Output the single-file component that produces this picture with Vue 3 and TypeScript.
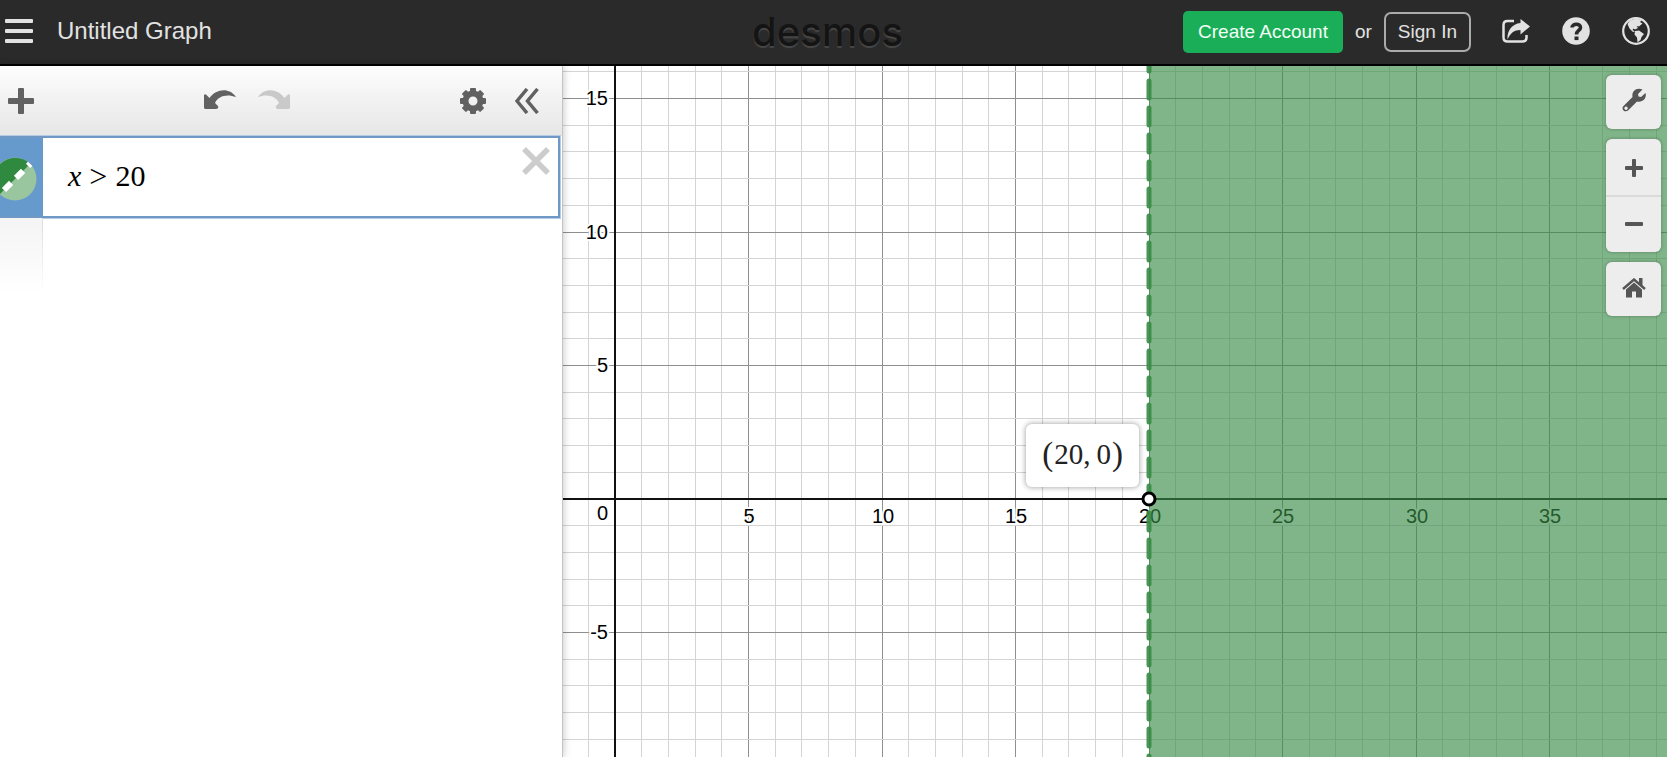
<script setup lang="ts">
import { computed, onBeforeUnmount, onMounted, ref } from 'vue'

interface Tick {
  value: number
  pos: number
  major: boolean
}

const UNIT = 26.7
const ORIGIN = { x: 53, y: 433 }
const BOUNDARY = 20
const LABEL_ROOM = 14

const title = ref('Untitled Graph')
const teeth = [0, 45, 90, 135, 180, 225, 270, 315]

const graph = ref<HTMLElement | null>(null)
const width = ref(0)
const height = ref(0)
let observer: ResizeObserver | undefined

function measure() {
  if (!graph.value) return
  width.value = graph.value.clientWidth
  height.value = graph.value.clientHeight
}

onMounted(() => {
  measure()
  observer = new ResizeObserver(measure)
  if (graph.value) observer.observe(graph.value)
})

onBeforeUnmount(() => observer?.disconnect())

function ticks(from: number, to: number, origin: number, direction: 1 | -1): Tick[] {
  const list: Tick[] = []
  for (let value = from; value <= to; value++) {
    if (value === 0) continue
    list.push({
      value,
      pos: Math.floor(origin + direction * value * UNIT),
      major: value % 5 === 0,
    })
  }
  return list
}

const columns = computed(() =>
  ticks(-1, Math.floor((width.value - ORIGIN.x) / UNIT), ORIGIN.x, 1),
)
const rows = computed(() =>
  ticks(-Math.floor((height.value - ORIGIN.y) / UNIT), 16, ORIGIN.y, -1),
)
const xLabels = computed(() =>
  columns.value.filter((t) => t.major && t.pos < width.value - LABEL_ROOM),
)
const yLabels = computed(() =>
  rows.value.filter((t) => t.major && t.pos < height.value - LABEL_ROOM),
)
const boundaryX = Math.round(ORIGIN.x + BOUNDARY * UNIT)
</script>

<template>
  <div class="app">
    <header class="header">
      <div class="side">
        <button class="icon-button" type="button" aria-label="Open menu">
          <svg width="28" height="24" viewBox="0 0 28 24" fill="currentColor">
            <rect width="28" height="4" rx="1" />
            <rect y="10" width="28" height="4" rx="1" />
            <rect y="20" width="28" height="4" rx="1" />
          </svg>
        </button>
        <button class="title" type="button">{{ title }}</button>
      </div>
      <a class="logo" href="#">desmos</a>
      <div class="side account">
        <button class="create" type="button">Create Account</button>
        <span class="or">or</span>
        <button class="sign-in" type="button">Sign In</button>
        <nav class="links">
          <button class="icon-button" type="button" aria-label="Share">
            <svg width="28" height="28" viewBox="0 0 28 28">
              <path d="M12 4H5.500Q1.500 4 1.500 8V20.500Q1.500 24.500 5.500 24.500H20.500Q24.500 24.500 24.500 20.500V18" fill="none" stroke="currentColor" stroke-width="2.500" />
              <path d="M18.500 2L28 9.500L18.500 17.500V13C12 13 8.500 16 5.500 22.500C5 14 9.500 7 18.500 6Z" fill="currentColor" />
            </svg>
          </button>
          <button class="icon-button" type="button" aria-label="Help">
            <svg width="28" height="28" viewBox="0 0 28 28">
              <circle cx="14" cy="14" r="13.800" fill="currentColor" />
              <path d="M10 10.500C10 6.500 18.500 6 18.500 10.500C18.500 13.500 14.500 13.500 14.500 17.500" fill="none" stroke="#2a2a2a" stroke-width="3.600" />
              <rect x="12.500" y="19.500" width="4" height="3.600" fill="#2a2a2a" />
            </svg>
          </button>
          <button class="icon-button" type="button" aria-label="Language">
            <svg width="28" height="28" viewBox="0 0 28 28">
              <circle cx="14" cy="14" r="12.800" fill="none" stroke="currentColor" stroke-width="2.200" />
              <path d="M8 3.500L14 1.500L20 3L18 5L20.500 6.500L17 9.500L14.500 9L16 11L13 12.500L11.500 11.500L10.500 13L13 14.500L11 15L7.500 11.500L5.500 7Z" fill="currentColor" />
              <path d="M13 14L17 13.500L22 17L19.500 20L18.500 23L15.500 25.500L15 20.500L12.500 17.500Z" fill="currentColor" />
            </svg>
          </button>
        </nav>
      </div>
    </header>

    <main class="workspace">
      <section class="panel" aria-label="Expression list">
        <div class="toolbar">
          <button class="tool" type="button" aria-label="Add item">
            <svg width="26" height="26" viewBox="0 0 26 26" fill="currentColor">
              <rect x="10" width="6" height="26" rx="1" />
              <rect y="10" width="26" height="6" rx="1" />
            </svg>
          </button>
          <div class="history">
            <button class="tool" type="button" aria-label="Undo">
              <svg width="32" height="22" viewBox="0 0 32 22">
                <path d="M0 5Q1 3.500 2.500 5L5.500 8C12-1 25-3 32 7C23 3.500 14 6 11 13L14 16Q15 19 12 19H1.500Q0 19 0 17.500Z" fill="currentColor" />
              </svg>
            </button>
            <button class="tool" type="button" aria-label="Redo" disabled>
              <svg width="32" height="22" viewBox="0 0 32 22">
                <path d="M32 5Q31 3.500 29.500 5L26.500 8C20-1 7-3 0 7C9 3.500 18 6 21 13L18 16Q17 19 20 19H30.500Q32 19 32 17.500Z" fill="currentColor" />
              </svg>
            </button>
          </div>
          <div class="settings">
            <button class="tool" type="button" aria-label="Edit list">
              <svg width="26" height="26" viewBox="-13 -13 26 26">
                <circle r="7.500" fill="none" stroke="currentColor" stroke-width="6" />
                <rect v-for="angle in teeth" :key="angle" x="-3" y="-13" width="6" height="5" rx="1" fill="currentColor" :transform="`rotate(${angle})`" />
              </svg>
            </button>
            <button class="tool" type="button" aria-label="Hide list">
              <svg width="24" height="26" viewBox="0 0 24 26" fill="none" stroke="currentColor" stroke-width="3.500">
                <path d="M12 1L2 13L12 25M22.500 1L12.500 13L22.500 25" />
              </svg>
            </button>
          </div>
        </div>

        <div class="expression">
          <button class="tab" type="button" aria-label="Hide this expression">
            <svg width="44" height="44" viewBox="0 0 44 44">
              <circle cx="22" cy="22" r="21.500" fill="#99c59f" />
              <path d="M6.800 37.200A21.500 21.500 0 0 1 37.200 6.800Z" fill="#2f8a3f" />
              <path d="M11 33L37.200 6.800" fill="none" stroke="#fff" stroke-width="6" stroke-dasharray="10 7" />
            </svg>
          </button>
          <div class="formula" role="textbox" aria-label="Expression 1" contenteditable="true" spellcheck="false"><i>x</i><span class="relation">&gt;</span><span>20</span></div>
          <button class="remove" type="button" aria-label="Delete expression">
            <svg width="28" height="28" viewBox="0 0 28 28" fill="none" stroke="currentColor" stroke-width="5.500">
              <path d="M2 2L26 26M26 2L2 26" />
            </svg>
          </button>
        </div>
        <div class="next-item"></div>
      </section>

      <section ref="graph" class="graph" aria-label="Graph">
        <svg class="plot" width="100%" height="100%">
          <g shape-rendering="crispEdges">
            <rect v-for="t in columns" :key="'c' + t.value" :class="t.major ? 'major' : 'minor'" :x="t.pos" y="0" width="1" height="100%" />
            <rect v-for="t in rows" :key="'r' + t.value" :class="t.major ? 'major' : 'minor'" x="0" :y="t.pos" width="100%" height="1" />
            <rect class="axis" :x="ORIGIN.x - 1" y="0" width="2" height="100%" />
            <rect class="axis" x="0" :y="ORIGIN.y - 1" width="100%" height="2" />
          </g>
          <g class="labels">
            <text v-for="t in xLabels" :key="'x' + t.value" :x="t.pos + 1" :y="ORIGIN.y + 24" text-anchor="middle">{{ t.value }}</text>
            <text v-for="t in yLabels" :key="'y' + t.value" :x="ORIGIN.x - 7" :y="t.pos + 7" text-anchor="end">{{ t.value }}</text>
            <text :x="ORIGIN.x - 7" :y="ORIGIN.y + 21" text-anchor="end">0</text>
          </g>
          <rect class="region" :x="boundaryX" y="0" width="100%" height="100%" />
          <line class="boundary" :x1="boundaryX" y1="0" :x2="boundaryX" y2="100%" />
          <circle class="point" :cx="boundaryX" :cy="ORIGIN.y" r="6" />
        </svg>

        <output class="coordinates"><span class="paren">(</span>20<span class="comma">,</span>0<span class="paren">)</span></output>

        <div class="controls">
          <button class="control" type="button" aria-label="Graph settings">
            <svg width="24" height="28" viewBox="0 0 24 28">
              <path d="M20.500 1.500L16 6L16.500 8.500L19 9L23.500 5C25 10 21 15 15 13.500L6 22.500C3 25-1.500 21 1.500 18L10.500 9C9.500 3 14.500-1 20.500 1.500ZM4 18.500A1.700 1.700 0 1 0 4.100 18.500Z" fill="currentColor" fill-rule="evenodd" />
            </svg>
          </button>
          <div class="zoom">
            <button class="control" type="button" aria-label="Zoom in">
              <svg width="18" height="18" viewBox="0 0 18 18" fill="currentColor">
                <rect x="7" width="4" height="18" rx="1" />
                <rect y="7" width="18" height="4" rx="1" />
              </svg>
            </button>
            <button class="control" type="button" aria-label="Zoom out">
              <svg width="18" height="18" viewBox="0 0 18 18" fill="currentColor">
                <rect y="7" width="18" height="4" rx="1" />
              </svg>
            </button>
          </div>
          <button class="control" type="button" aria-label="Default viewport">
            <svg width="24" height="22" viewBox="0 0 24 22">
              <path d="M1 11L12 1.500L23 11" fill="none" stroke="currentColor" stroke-width="2.400" />
              <path d="M17 0H20.500V8L17 5Z" fill="currentColor" />
              <path d="M12 4.500L20 11.500V19.500H14V13.500H10V19.500H4V11.500Z" fill="currentColor" />
            </svg>
          </button>
        </div>
      </section>
    </main>
  </div>
</template>

<style>
body {
  margin: 0;
}
</style>

<style scoped>
.app {
  display: grid;
  grid-template-rows: auto 1fr;
  height: 100vh;
  overflow: hidden;
  background: #fff;
  font-family: "Liberation Sans", Arial, sans-serif;
}

button {
  margin: 0;
  padding: 0;
  border: 0;
  background: none;
  color: inherit;
  font: inherit;
  cursor: pointer;
}

svg {
  display: block;
}

.header {
  display: grid;
  grid-template-columns: 1fr auto 1fr;
  align-items: center;
  height: 64px;
  padding: 0 17px 0 5px;
  border-bottom: 2px solid #000;
  background: #2a2a2a;
  color: #e2e2e2;
}

.side {
  display: flex;
  align-items: center;
  gap: 24px;
  padding-bottom: 2px;
}

.title {
  font-size: 24px;
  line-height: 28px;
}

.logo {
  color: #141414;
  font-family: Inter, "Liberation Sans", sans-serif;
  font-size: 40px;
  font-weight: 500;
  line-height: 48px;
  text-decoration: none;
  text-shadow: 0 2px 1px #484848;
}

.account {
  justify-content: flex-end;
  gap: 12px;
  padding-bottom: 0;
  font-size: 19px;
  line-height: 24px;
}

.create {
  padding: 9px 15px;
  border-radius: 5px;
  background: #1bae58;
  color: #f2fff6;
}

.sign-in {
  padding: 6px 12px;
  border: 2px solid #aaa;
  border-radius: 7px;
}

.links {
  display: flex;
  gap: 32px;
  margin-left: 19px;
  padding-bottom: 2px;
}

.workspace {
  display: flex;
  min-height: 0;
}

.panel {
  position: relative;
  z-index: 1;
  flex: none;
  box-sizing: border-box;
  width: 563px;
  border-right: 1px solid #c4c4c4;
  background: #fff;
  box-shadow: 0 0 8px rgba(0, 0, 0, 0.25);
}

.toolbar {
  display: grid;
  grid-template-columns: 1fr auto 1fr;
  align-items: center;
  height: 70px;
  padding: 0 23px 0 8px;
  background: linear-gradient(#fdfdfd, #e6e6e6);
  color: #616161;
}

.tool {
  justify-self: start;
}

.tool:disabled {
  color: #c9c9c9;
}

.history {
  display: flex;
  gap: 22px;
  margin-right: 54px;
}

.settings {
  display: flex;
  justify-content: flex-end;
  gap: 29px;
}

.expression {
  display: flex;
  align-items: stretch;
  box-sizing: border-box;
  height: 82px;
  margin-right: 2px;
  border: 2px solid #6f99c4;
  border-left: 0;
  background: #fff;
  box-shadow: 0 0 0 1px #b3cce6;
}

.tab {
  display: flex;
  flex: none;
  align-items: center;
  justify-content: center;
  width: 43px;
  padding: 3px 14px 0 0;
  box-sizing: border-box;
  overflow: hidden;
  background: #6699cc;
}

.tab svg {
  flex: none;
}

.formula {
  display: flex;
  flex: 1;
  align-items: center;
  gap: 8px;
  padding: 0 0 3px 25px;
  outline: none;
  color: #000;
  font-family: "Liberation Serif", "Times New Roman", serif;
  font-size: 30px;
  line-height: 36px;
}

.relation {
  font-size: 32px;
}

.remove {
  align-self: flex-start;
  padding: 9px 8px;
  color: #ccc;
}

.next-item {
  width: 42px;
  height: 76px;
  border-right: 1px solid;
  border-image: linear-gradient(#dcdcdc, #fff) 1;
  background: linear-gradient(#f4f4f4, #fff);
}

.graph {
  position: relative;
  flex: 1;
  min-width: 0;
  margin-left: -1px;
  overflow: hidden;
}

.minor {
  fill: #d4d4d4;
}

.major {
  fill: #8f8f8f;
}

.axis {
  fill: #111;
}

.labels {
  fill: #000;
  stroke: #fff;
  stroke-width: 4px;
  stroke-linejoin: round;
  paint-order: stroke;
  font-size: 20px;
}

.region {
  fill: #388c46;
  fill-opacity: 0.64;
}

.boundary {
  stroke: #388c46;
  stroke-width: 5px;
  stroke-linecap: round;
  stroke-dasharray: 17 10;
  stroke-dashoffset: 12px;
  stroke-opacity: 0.92;
}

.point {
  fill: #fff;
  stroke: #000;
  stroke-width: 3px;
}

.coordinates {
  position: absolute;
  top: 358px;
  left: 464px;
  display: flex;
  align-items: center;
  justify-content: center;
  box-sizing: border-box;
  width: 113px;
  height: 63px;
  padding-bottom: 3px;
  border-radius: 6px;
  background: #fff;
  box-shadow: 0 0 5px 1px rgba(0, 0, 0, 0.3);
  color: #222;
  font-family: "Liberation Serif", "Times New Roman", serif;
  font-size: 29px;
  line-height: 36px;
}

.paren {
  padding: 0 1px;
  font-size: 33px;
}

.comma {
  padding-right: 6px;
}

.controls {
  position: absolute;
  top: 9px;
  right: 6px;
  display: flex;
  flex-direction: column;
  gap: 10px;
  color: #555;
}

.control {
  display: flex;
  align-items: center;
  justify-content: center;
  width: 55px;
  height: 54px;
  border-radius: 6px;
  background: #ededed;
}

.controls > * {
  border-radius: 6px;
  box-shadow: 0 0 3px 1px rgba(0, 0, 0, 0.18);
}

.zoom {
  padding: 2px 0 1px;
  background: #ededed;
}

.zoom .control + .control {
  box-sizing: content-box;
  border-top: 2px solid #dadada;
  border-radius: 0 0 6px 6px;
}
</style>
